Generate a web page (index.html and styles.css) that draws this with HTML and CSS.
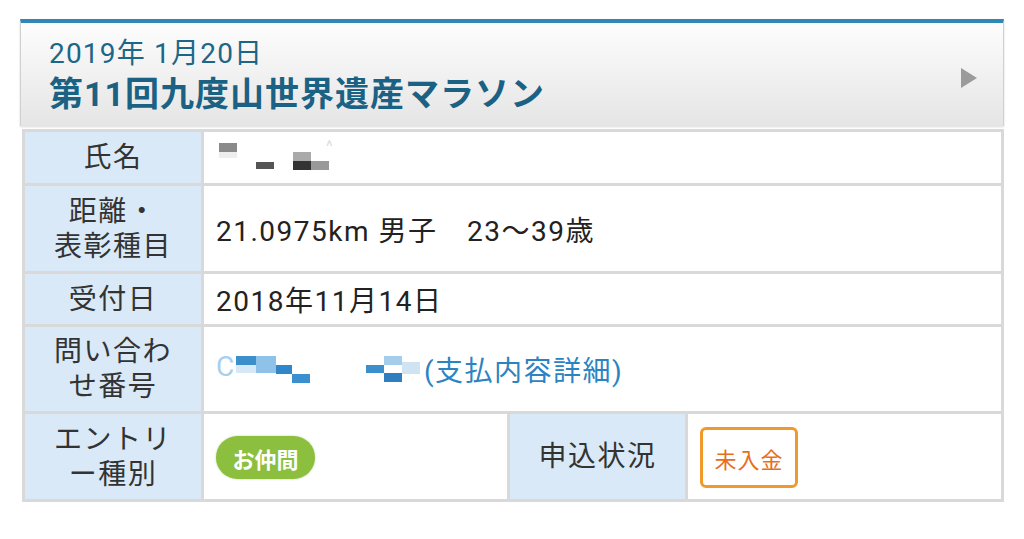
FILE: index.html
```html
<!DOCTYPE html>
<html lang="ja">
<head>
<meta charset="utf-8">
<link rel="stylesheet" href="styles.css">
</head>
<body>
<div class="card">
  <div class="head">
    <div class="head-text">
      <div class="date">2019年 1月20日</div>
      <div class="title">第11回九度山世界遺産マラソン</div>
    </div>
    <svg class="arrow" width="16" height="20" viewBox="0 0 16 20"><polygon points="0,0 16,10 0,20" fill="#9b9b9b"/></svg>
  </div>
  <div class="grid">
    <div class="lbl">氏名</div>
    <div class="val span name">
      <span class="mos">
        <i class="m1"></i><i class="m2"></i><i class="m3"></i>
        <i class="m4"></i><i class="m5"></i><i class="m6"></i>
        <span class="caret">^</span>
      </span>
    </div>

    <div class="lbl two">距離・<br>表彰種目</div>
    <div class="val span">21.0975km 男子　23〜39歳</div>

    <div class="lbl">受付日</div>
    <div class="val span">2018年11月14日</div>

    <div class="lbl two">問い合わ<br>せ番号</div>
    <div class="val span">
      <span class="mosb">
        <span class="cc">C</span>
        <i class="b1"></i><i class="b2"></i><i class="b3"></i><i class="b4"></i><i class="b5"></i>
      </span><span class="mosc">
        <i class="c1"></i><i class="c2"></i><i class="c3"></i><i class="c4"></i>
      </span><span class="lt">(支払内容詳細)</span>
    </div>

    <div class="lbl two">エントリ<br>ー種別</div>
    <div class="val"><span class="pill">お仲間</span></div>
    <div class="lbl">申込状況</div>
    <div class="val"><span class="tag">未入金</span></div>
  </div>
</div>
</body>
</html>
```
FILE: styles.css
```css
html, body {
  margin: 0;
  padding: 0;
  background: #fff;
}
body {
  font-family: Roboto, "Noto Sans CJK JP", sans-serif;
  color: #222;
}
.card {
  padding-top: 19px;
  margin-left: 20px;
  width: 984px;
}
.head {
  border-top: 4px solid #2f87b6;
  border-left: 1px solid #d0d0d0;
  border-right: 1px solid #d0d0d0;
  background: linear-gradient(#fdfdfd, #e5e5e5);
  height: 107px;
  box-sizing: border-box;
  display: flex;
  align-items: center;
  justify-content: space-between;
  padding: 0 26px 0 28px;
  box-shadow: 0 1px 2px rgba(0,0,0,0.15);
}
.head-text {
  margin-top: 4px;
}
.date {
  font-size: 28px;
  line-height: 32px;
  color: #1c6688;
  letter-spacing: 1.2px;
}
.title {
  font-size: 34px;
  line-height: 42px;
  font-weight: bold;
  color: #1b6184;
  letter-spacing: 1px;
  margin-top: 3px;
}
.arrow {
  margin-top: 6px;
}
.grid {
  margin: 3px 0 0 2px;
  width: 982px;
  box-sizing: border-box;
  border: 3px solid #d9d9d9;
  background: #d9d9d9;
  display: grid;
  grid-template-columns: 176px 303px 175px 1fr;
  grid-template-rows: 51px 85px 50px 84px 85px;
  gap: 3px;
}
.lbl {
  background: #d9e9f7;
  display: flex;
  align-items: center;
  justify-content: center;
  text-align: center;
  font-size: 28px;
  letter-spacing: 1.5px;
  line-height: 35px;
  color: #333;
}
.val {
  background: #fff;
  display: flex;
  align-items: center;
  padding-left: 12px;
  font-size: 28px;
  letter-spacing: 1.5px;
  color: #222;
}
.span {
  grid-column: 2 / 5;
}
.mos, .mosb, .mosc {
  display: inline-block;
  position: relative;
  height: 30px;
  flex: none;
}
.mos { width: 130px; }
.mos i, .mosb i, .mosc i {
  position: absolute;
  display: block;
}
.m1 { left: 3px; top: 0; width: 18px; height: 9px; background: #8a8a8a; }
.m2 { left: 3px; top: 9px; width: 18px; height: 6px; background: #eeeeee; }
.m3 { left: 40px; top: 19px; width: 18px; height: 7px; background: #555; }
.m4 { left: 77px; top: 9px; width: 18px; height: 9px; background: #aaa; }
.m5 { left: 77px; top: 18px; width: 18px; height: 9px; background: #333; }
.m6 { left: 95px; top: 18px; width: 18px; height: 9px; background: #999; }
.caret {
  position: absolute;
  left: 110px;
  top: -6px;
  font-size: 16px;
  color: #ddd;
}
.mosb { width: 150px; }
.cc {
  position: absolute;
  left: 0;
  top: -4px;
  font-size: 28px;
  color: #a9cfee;
  letter-spacing: 0;
}
.b1 { left: 20px; top: 2px; width: 20px; height: 9px; background: #3d8fcb; }
.b2 { left: 20px; top: 11px; width: 20px; height: 8px; background: #d7e9f6; }
.b3 { left: 40px; top: 2px; width: 20px; height: 17px; background: #8ec2e8; }
.b4 { left: 60px; top: 11px; width: 16px; height: 9px; background: #2f87c9; }
.b5 { left: 76px; top: 20px; width: 18px; height: 9px; background: #3a90cf; }
.mosc { width: 58px; }
.c1 { left: 0; top: 11px; width: 18px; height: 8px; background: #3a8fcc; }
.c2 { left: 18px; top: 2px; width: 18px; height: 9px; background: #a4cdeb; }
.c3 { left: 18px; top: 19px; width: 18px; height: 9px; background: #2f7fc0; }
.c4 { left: 36px; top: 8px; width: 18px; height: 12px; background: #cfe3f3; }
.lt {
  color: #2c83c2;
}
.pill {
  background: #8dbf3f;
  color: #fff;
  font-size: 22px;
  letter-spacing: 0;
  font-weight: bold;
  border-radius: 22px;
  height: 43px;
  width: 99px;
  display: flex;
  align-items: center;
  justify-content: center;
  box-shadow: 0 0 2px rgba(120,170,50,0.5);
  margin-top: 2px;
}
.tag {
  border: 3px solid #f09a2c;
  border-radius: 6px;
  color: #e86e1c;
  font-size: 22px;
  letter-spacing: 1px;
  width: 98px;
  height: 61px;
  box-sizing: border-box;
  display: flex;
  align-items: center;
  justify-content: center;
  margin-top: 2px;
}
```
